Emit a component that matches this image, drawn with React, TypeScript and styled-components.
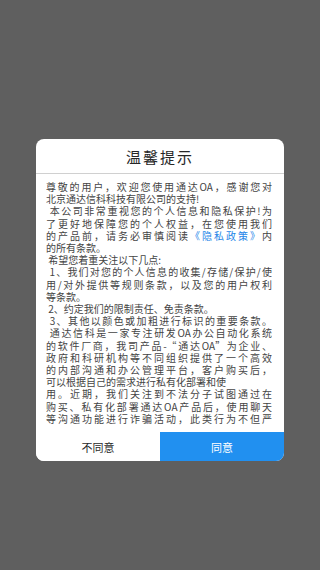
import React from "react";
import styled, { createGlobalStyle } from "styled-components";

const Global = createGlobalStyle`
  html, body { margin: 0; padding: 0; }
  body {
    background: #5f5f5f;
    font-family: "Noto Sans CJK SC", "Noto Sans", sans-serif;
  }
`;

const Overlay = styled.div`
  width: 320px;
  height: 570px;
  box-sizing: border-box;
  padding-top: 139px;
  display: flex;
  justify-content: center;
  align-items: flex-start;
  background: #5f5f5f;
`;

const Dialog = styled.div`
  width: 248px;
  background: #ffffff;
  border-radius: 8px;
  overflow: hidden;
  display: flex;
  flex-direction: column;
`;

const Title = styled.div`
  height: 34px;
  border-bottom: 1px solid #d0d0d0;
  display: flex;
  align-items: center;
  justify-content: center;
  font-size: 15px;
  color: #262626;
  letter-spacing: 2px;
`;

const Body = styled.div`
  height: 258px;
  box-sizing: border-box;
  padding: 7px 12px 7px 10px;
  display: flex;
`;

const Scroll = styled.div`
  flex: 1;
  overflow: hidden;
  font-size: 10px;
  line-height: 12.2px;
  color: #444444;
`;

const Line = styled.div<{ $full?: boolean }>`
  white-space: pre;
  text-align: ${(p) => (p.$full ? "justify" : "left")};
  text-align-last: ${(p) => (p.$full ? "justify" : "left")};
`;

const Link = styled.span`
  color: #1e86e8;
`;

const Footer = styled.div`
  display: flex;
  height: 29px;
`;

const Btn = styled.button<{ $primary?: boolean }>`
  flex: 1;
  border: none;
  margin: 0;
  padding: 0;
  font-family: inherit;
  font-size: 11px;
  line-height: 14px;
  background: ${(p) => (p.$primary ? "#2190f0" : "#ffffff")};
  color: ${(p) => (p.$primary ? "#ffffff" : "#2a2a2a")};
  display: flex;
  align-items: center;
  justify-content: center;
`;

type L = { t: React.ReactNode; f?: boolean };

const lines: L[] = [
  { t: "尊敬的用户，欢迎您使用通达OA，感谢您对", f: true },
  { t: "北京通达信科科技有限公司的支持!" },
  { t: " 本公司非常重视您的个人信息和隐私保护!为", f: true },
  { t: "了更好地保障您的个人权益，在您使用我们", f: true },
  {
    t: (
      <>
        的产品前，请务必审慎阅读<Link>《隐私政策》</Link>内
      </>
    ),
    f: true,
  },
  { t: "的所有条款。" },
  { t: " 希望您着重关注以下几点:" },
  { t: " 1、我们对您的个人信息的收集/存储/保护/使", f: true },
  { t: "用/对外提供等规则条款，以及您的用户权利", f: true },
  { t: "等条款。" },
  { t: " 2、约定我们的限制责任、免责条款。" },
  { t: " 3、其他以颜色或加粗进行标识的重要条款。", f: true },
  { t: " 通达信科是一家专注研发OA办公自动化系统", f: true },
  { t: "的软件厂商，我司产品-“通达OA”为企业、", f: true },
  { t: "政府和科研机构等不同组织提供了一个高效", f: true },
  { t: "的内部沟通和办公管理平台，客户购买后，", f: true },
  { t: "可以根据自己的需求进行私有化部署和使" },
  { t: "用。近期，我们关注到不法分子试图通过在", f: true },
  { t: "购买、私有化部署通达OA产品后，使用聊天", f: true },
  { t: "等沟通功能进行诈骗活动，此类行为不但严", f: true },
  { t: "重损害了公司的声誉，也侵害了广大用户的", f: true },
  { t: "合法权益。" },
];

export default function App() {
  return (
    <>
      <Global />
      <Overlay>
        <Dialog>
          <Title>温馨提示</Title>
          <Body>
            <Scroll>
              {lines.map((l, i) => (
                <Line key={i} $full={l.f}>
                  {l.t}
                </Line>
              ))}
            </Scroll>
          </Body>
          <Footer>
            <Btn>不同意</Btn>
            <Btn $primary>同意</Btn>
          </Footer>
        </Dialog>
      </Overlay>
    </>
  );
}
